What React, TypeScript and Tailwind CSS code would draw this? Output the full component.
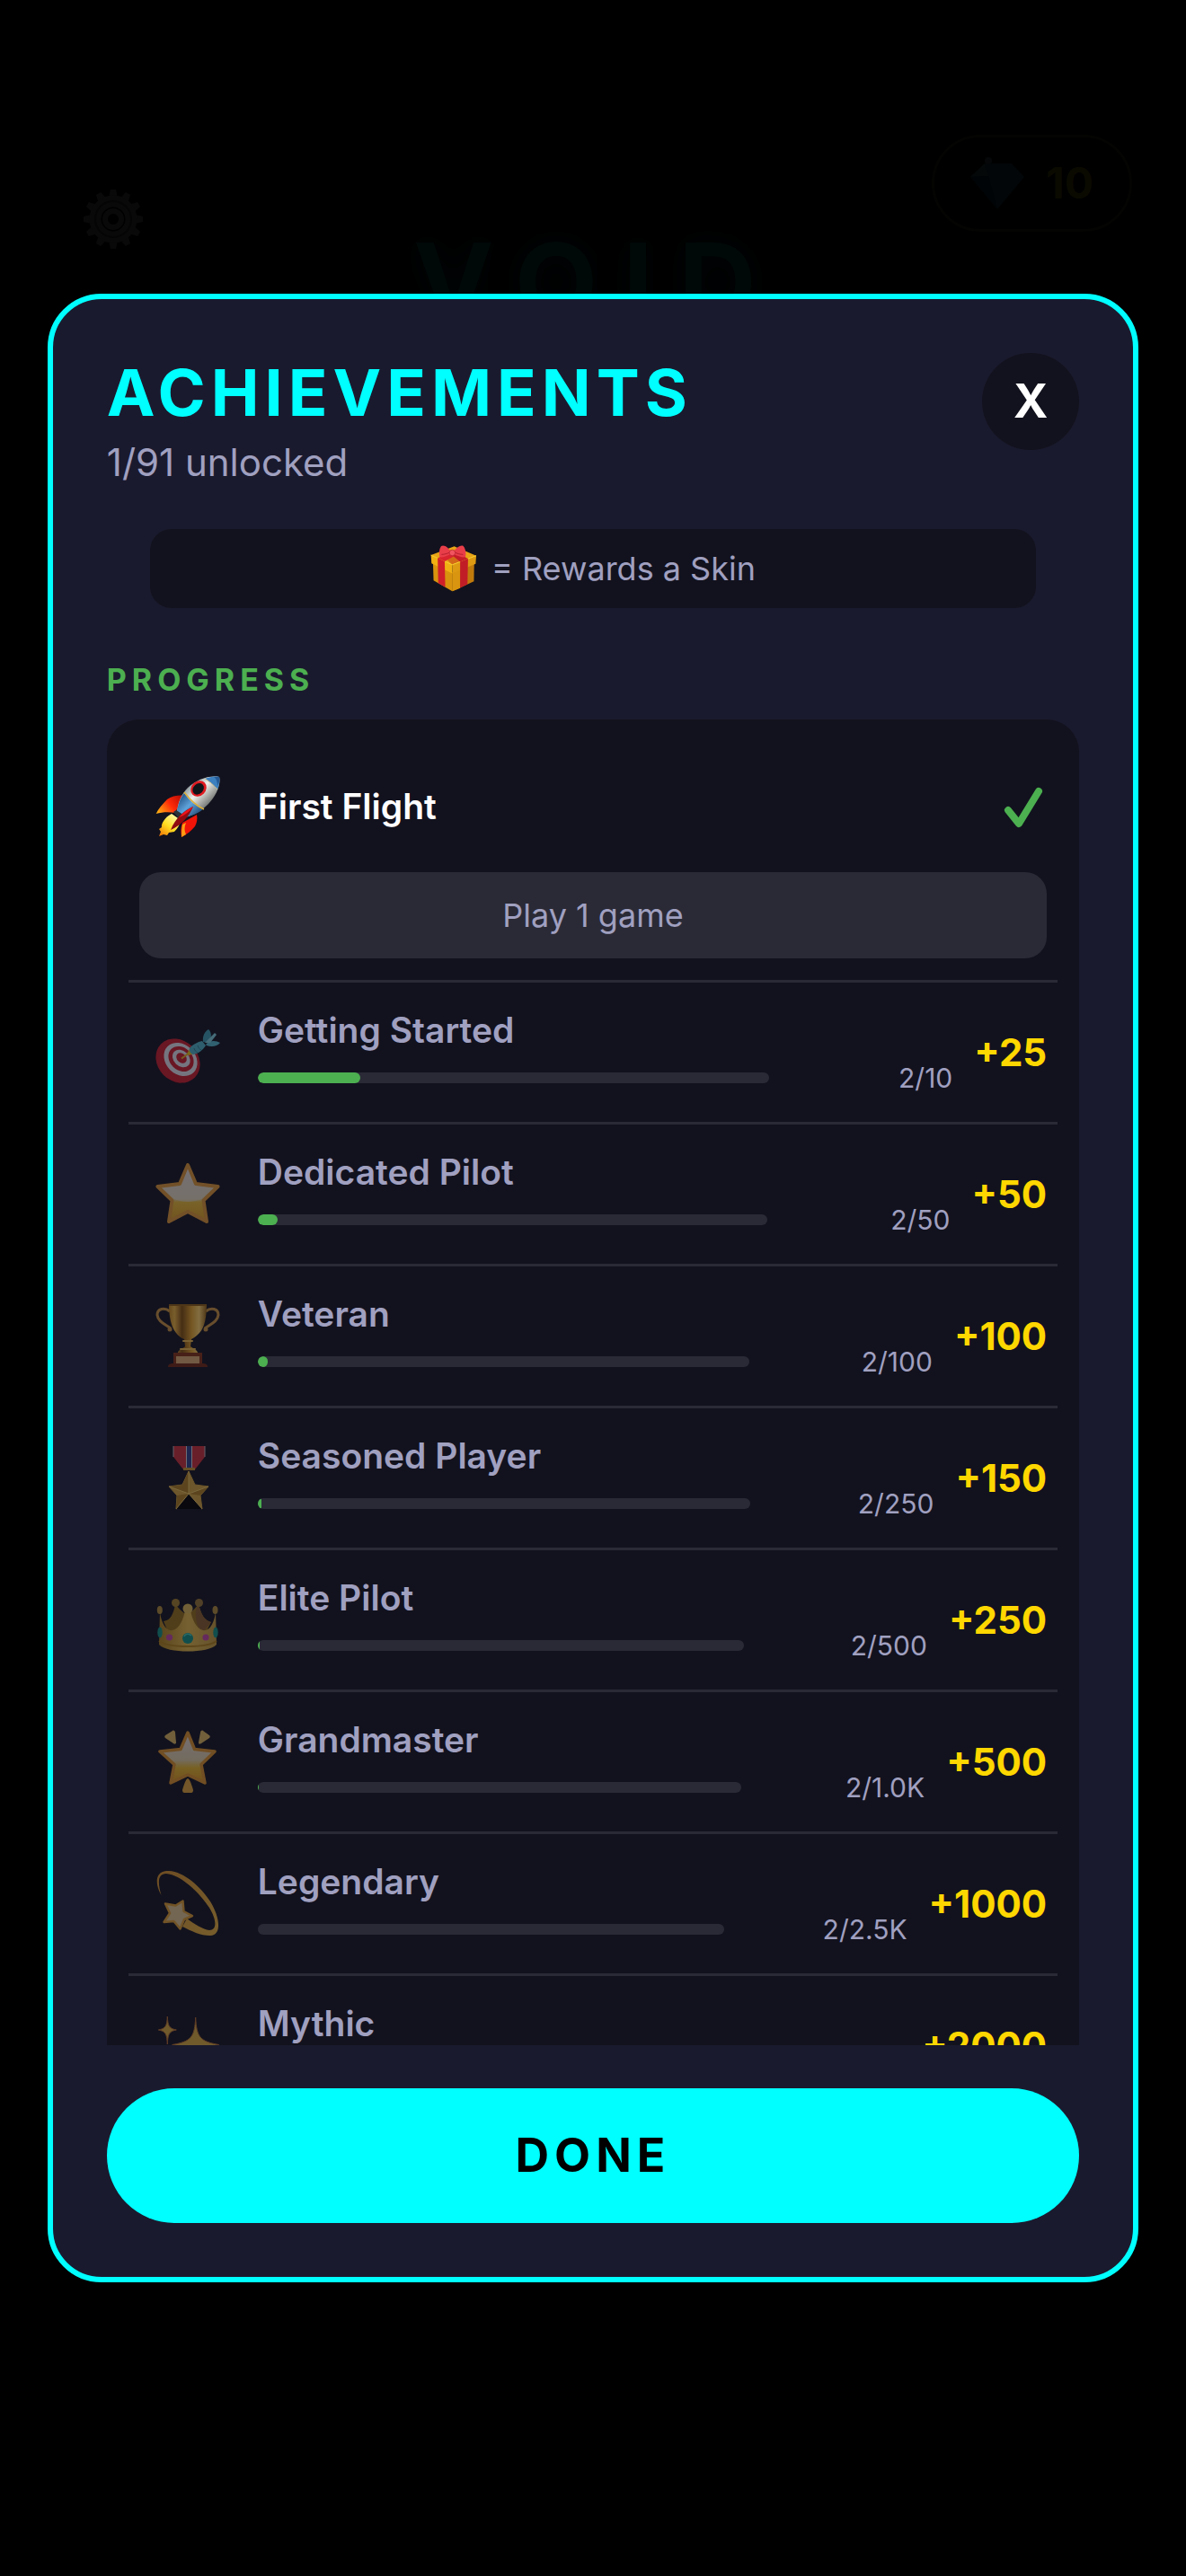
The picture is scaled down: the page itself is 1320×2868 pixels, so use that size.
import type { ReactNode } from 'react'

type Achievement = {
  name: string
  icon: ReactNode
  current: number
  target: number
  targetLabel: string
  reward: number
}

const achievements: Achievement[] = [
  { name: 'Getting Started', icon: <TargetIcon />, current: 2, target: 10, targetLabel: '10', reward: 25 },
  { name: 'Dedicated Pilot', icon: <StarIcon />, current: 2, target: 50, targetLabel: '50', reward: 50 },
  { name: 'Veteran', icon: <TrophyIcon />, current: 2, target: 100, targetLabel: '100', reward: 100 },
  { name: 'Seasoned Player', icon: <MedalIcon />, current: 2, target: 250, targetLabel: '250', reward: 150 },
  { name: 'Elite Pilot', icon: <CrownIcon />, current: 2, target: 500, targetLabel: '500', reward: 250 },
  { name: 'Grandmaster', icon: <GlowingStarIcon />, current: 2, target: 1000, targetLabel: '1.0K', reward: 500 },
  { name: 'Legendary', icon: <DizzyIcon />, current: 2, target: 2500, targetLabel: '2.5K', reward: 1000 },
  { name: 'Mythic', icon: <SparklesIcon />, current: 2, target: 5000, targetLabel: '5.0K', reward: 2000 },
]

export default function App() {
  return (
    <div className="relative min-h-screen overflow-hidden bg-black font-['Inter',sans-serif]">
      <HomeBackdrop />

      <div className="absolute inset-0 flex items-center justify-center">
        <section
          role="dialog"
          aria-labelledby="achievements-title"
          className="flex h-[77.2vh] w-[92%] flex-col rounded-[60px] border-6 border-[#00ffff] bg-[#1a1a2e] p-15"
        >
          <header className="flex items-start justify-between">
            <div>
              <h1
                id="achievements-title"
                className="text-[72px] leading-[88px] font-bold tracking-[6px] text-[#00ffff]"
              >
                ACHIEVEMENTS
              </h1>
              <p className="mt-2 text-[42px] leading-[52px] text-[#a0a0c0]">1/91 unlocked</p>
            </div>
            <button
              type="button"
              aria-label="Close"
              className="flex size-27 items-center justify-center rounded-full bg-[#12121e] text-[52px] font-bold text-white"
            >
              X
            </button>
          </header>

          <div className="mx-12 mt-12 flex h-22 items-center justify-center gap-4 rounded-3xl bg-[#12121e] text-[36px] text-[#a0a0c0]">
            <GiftIcon />
            <span>= Rewards a Skin</span>
          </div>

          <div className="mt-15 min-h-0 flex-1 overflow-y-auto [scrollbar-width:none]">
            <h2 className="text-[34px] leading-10 font-bold tracking-[6px] text-[#4caf50]">PROGRESS</h2>
            <ul className="mt-6 rounded-[36px] bg-[#12121e] p-6">
              <li className="border-b-3 border-[#2a2a36] px-3 pb-6">
                <div className="flex h-[146px] items-center gap-6">
                  <div className="flex w-27 justify-center">
                    <RocketIcon />
                  </div>
                  <h3 className="flex-1 text-[39px] font-semibold text-white">First Flight</h3>
                  <CheckMark />
                </div>
                <p className="rounded-3xl bg-[#2a2a36] py-6 text-center text-[36px] leading-12 text-[#a0a0c0]">
                  Play 1 game
                </p>
              </li>
              {achievements.map((item) => (
                <AchievementRow key={item.name} item={item} />
              ))}
            </ul>
          </div>

          <button
            type="button"
            className="mt-12 h-[150px] rounded-full bg-[#00ffff] text-[52px] font-bold tracking-[6px] text-black"
          >
            DONE
          </button>
        </section>
      </div>
    </div>
  )
}

function AchievementRow({ item }: { item: Achievement }) {
  const percent = Math.floor((item.current / item.target) * 1000) / 10

  return (
    <li className="flex h-[158px] items-center gap-6 border-b-3 border-[#2a2a36] px-3">
      <div className="flex w-27 justify-center opacity-50">{item.icon}</div>
      <div className="min-w-0 flex-1">
        <h3 className="text-[39px] leading-[46px] font-semibold text-[#a0a0c0]">{item.name}</h3>
        <div className="mt-3 flex items-center gap-6">
          <div className="h-3 flex-1 overflow-hidden rounded-full bg-[#2a2a36]">
            <div className="h-full rounded-full bg-[#4caf50]" style={{ width: `${percent}%` }} />
          </div>
          <span className="w-45 text-right text-[30px] leading-9 text-[#a0a0c0]">
            {`${item.current}/${item.targetLabel}`}
          </span>
        </div>
      </div>
      <span className="text-[42px] font-bold text-[#ffd700]">{`+${item.reward}`}</span>
    </li>
  )
}

// Home screen left almost black behind the open dialog
function HomeBackdrop() {
  return (
    <div aria-hidden="true" className="grid grid-cols-3 px-15 pt-[150px]">
      <div className="px-8 pt-15">
        <GearIcon />
      </div>
      <p className="pt-21 text-center text-[120px] leading-[160px] font-bold tracking-[28px] text-[#000808] [text-shadow:0_0_30px_#000608]">
        VOID
      </p>
      <div className="flex justify-end">
        <div className="flex h-27 items-center gap-6 rounded-full border-3 border-[#040402] px-10 text-[48px] font-bold text-[#0b0a00]">
          <DiamondIcon />
          10
        </div>
      </div>
    </div>
  )
}

function GearIcon() {
  const teeth = Array.from({ length: 12 }, (_, index) => index * 30)

  return (
    <svg viewBox="0 0 68 68" className="size-17" fill="#090909">
      {teeth.map((angle) => (
        <path key={angle} d="M29 10 L31 1 H37 L39 10Z" transform={`rotate(${angle} 34 34)`} />
      ))}
      <circle cx="34" cy="34" r="20" fill="none" stroke="#090909" strokeWidth="13" />
      <circle cx="34" cy="34" r="9" fill="none" stroke="#090909" strokeWidth="6" />
      <circle cx="34" cy="34" r="20" fill="none" stroke="#050505" strokeWidth="2" />
    </svg>
  )
}

function DiamondIcon() {
  return (
    <svg viewBox="0 0 60 60" className="size-15">
      <path d="M0 23 16 8h30l14 15-30 36Z" fill="#020608" />
      <path d="M0 23 16 8l4 14Z" fill="#050809" />
      <path d="m0 23 20-1 10 37Z" fill="#010406" />
      <circle cx="20" cy="5" r="4" fill="#050708" />
    </svg>
  )
}

function CheckMark() {
  return (
    <svg viewBox="0 0 48 48" role="img" aria-label="Unlocked" className="size-12">
      <path
        d="M5 28 17 43 39 7"
        fill="none"
        stroke="#4caf50"
        strokeWidth="8"
        strokeLinecap="round"
        strokeLinejoin="round"
      />
    </svg>
  )
}

function GiftIcon() {
  return (
    <svg viewBox="0 0 160 160" className="size-13">
      <path d="M9 60 75 94v64L11 121Z" fill="#d8930e" />
      <path d="M75 94 150 62l-1 62-74 34Z" fill="#c07a0c" />
      <path d="M75 94l27-11v64l-27 11Z" fill="#d9950f" />
      <path d="M2 34 82 4l75 32-82 31Z" fill="#e8a416" />
      <path d="M48 40 80 28l40 20-45 19Z" fill="#d46a18" />
      <path d="M2 34 75 67v30L4 62Z" fill="#f0b013" />
      <path d="M75 67l82-31-2 28-80 33Z" fill="#dd9a12" />
      <path d="M2 34 75 67l82-31" fill="none" stroke="#ffd633" strokeWidth="3" />
      <path d="M25 44 49 55l2 89-24-14Z" fill="#cf1f2a" />
      <path d="M102 57 129 46l-2 88-25 12Z" fill="#c11d26" />
      <path d="M25 44 66 28l22 6-39 21Z" fill="#d9232e" />
      <path d="M129 46 92 26l-18 8 28 23Z" fill="#c51c28" />
      <path d="M74 27C62 8 48-3 37 3c-7 10-8 25-5 37 10 4 26-2 42-13Z" fill="#e83e49" />
      <path d="M75 27C88 9 103-2 113 3c8 10 10 25 7 37-10 4-28-2-45-13Z" fill="#e83e49" />
      <path d="M38 32c8 0 20-3 30-8M112 32c-8 0-20-3-30-8" stroke="#b51e2c" strokeWidth="3" fill="none" />
      <circle cx="75" cy="26" r="10" fill="#f25560" stroke="#b51e2c" strokeWidth="2" />
    </svg>
  )
}

function RocketIcon() {
  return (
    <svg viewBox="0 0 72 72" className="size-18">
      <defs>
        <linearGradient id="rocket-body" x1="36" y1="14" x2="58" y2="36" gradientUnits="userSpaceOnUse">
          <stop offset="0" stopColor="#8f9a9e" />
          <stop offset=".4" stopColor="#f1f1ec" />
          <stop offset="1" stopColor="#6d716f" />
        </linearGradient>
        <linearGradient id="rocket-blue" x1="26" y1="28" x2="46" y2="48" gradientUnits="userSpaceOnUse">
          <stop offset="0" stopColor="#2a5c90" />
          <stop offset=".45" stopColor="#5ea3db" />
          <stop offset="1" stopColor="#234a75" />
        </linearGradient>
        <linearGradient id="rocket-fin" x1="30" y1="24" x2="4" y2="44" gradientUnits="userSpaceOnUse">
          <stop offset="0" stopColor="#b40a05" />
          <stop offset=".5" stopColor="#ff2a08" />
          <stop offset="1" stopColor="#ffae12" />
        </linearGradient>
        <linearGradient id="rocket-flame" x1="22" y1="46" x2="5" y2="68" gradientUnits="userSpaceOnUse">
          <stop offset="0" stopColor="#fff9a0" />
          <stop offset=".5" stopColor="#ffdd20" />
          <stop offset="1" stopColor="#f07806" />
        </linearGradient>
      </defs>
      <path d="M18 44C10 48 6 56 7 59l-3 2 2 3-2 5 5-2 4 1 2-3 6-1c4-4 6-8 7-13Z" fill="url(#rocket-flame)" />
      <path d="M32 23.500C25 23 18 24 13 28 8 33 3 39 .7 44c7-2 15-2 21-1Z" fill="url(#rocket-fin)" />
      <path d="M46 45c1 5 0 9-2 13-4 5-9 9-15 12-1-6-1-10 1-16Z" fill="#f01408" />
      <path d="M30 56c-1 5-1 9-1 14l5-3c-2-4-2-8 0-13Z" fill="#ff9b12" />
      <path d="M71 3c2 10-4 21-12 30-7 7-15 12-26 15l-9-6c1-11 5-20 12-27C46 6 59 1 71 3Z" fill="url(#rocket-body)" />
      <path d="M71 3c1 4 0 9-2 14-5-5-9-9-14-12 5-2 11-3 16-2Z" fill="#3d80c0" />
      <path d="M65 3c3 2 4 6 4 10 2-4 3-7 2-10Z" fill="#245a96" />
      <path d="M32 21c5 7 12 14 21 18-6 5-13 7-20 9l-9-6c1-8 3-14 8-21Z" fill="url(#rocket-blue)" />
      <path d="M32 20c6 8 13 15 22 19" fill="none" stroke="#dcae38" strokeWidth="1.500" />
      <path d="M55 5c5 3 10 7 14 12" fill="none" stroke="#d9c58e" strokeWidth="1" />
      <ellipse cx="48" cy="16" rx="9.500" ry="8" transform="rotate(-45 48 16)" fill="#e01a20" />
      <ellipse cx="47.500" cy="16" rx="7" ry="5.500" transform="rotate(-45 48 16)" fill="#10151a" />
      <path d="M20 42l6 7 5-4-8-5Z" fill="#2b3138" />
      <path d="M42 36C31 41 22 49 17 62c11-5 20-14 25-26Z" fill="#8f0b10" />
      <path d="M42 36c-6 3-12 7-16 12 6-2 12-6 16-12Z" fill="#ed141a" />
    </svg>
  )
}

function TargetIcon() {
  return (
    <svg viewBox="0 0 72 72" className="size-18">
      <path d="M40 60c-4 7-8 10-13 11-5 0-9-3-13-6Z" fill="#5d0d12" />
      <ellipse cx="25" cy="46" rx="26.500" ry="22.500" transform="rotate(45 25 46)" fill="#c01c28" />
      <ellipse cx="28" cy="44.500" rx="20.500" ry="16.500" transform="rotate(45 28 44.500)" fill="#d8d8e0" />
      <ellipse cx="28.500" cy="44" rx="15.500" ry="12.500" transform="rotate(45 28.500 44)" fill="#c01c28" />
      <ellipse cx="28.800" cy="43.500" rx="11" ry="8.500" transform="rotate(45 28.800 43.500)" fill="#d8d8e0" />
      <ellipse cx="29" cy="43" rx="6.500" ry="5" transform="rotate(45 29 43)" fill="#c01c28" />
      <path d="M29 43.500 38 37" stroke="#d9a520" strokeWidth="2" />
      <path d="m35 38 3-5 5 5-6 2Z" fill="#e0b818" />
      <path d="M38 32c3-4 9-7 14-8l4 5c-3 5-8 9-14 10-3-1-5-4-4-7Z" fill="#4aa9bc" />
      <path d="M53 25c-1-6 2-12 6-14 4 4 4 10-1 15Z" fill="#3a94a8" />
      <path d="M56 28c4-5 11-5 16-2-3 4-10 5-15 3Z" fill="#4fb0c4" />
      <path d="m55 26 11-11 2 2-7 9Z" fill="#78c4d2" />
      <path d="M43 32c1 3 2 4 4 5M47 29c1 3 2 4 4 5" stroke="#2d7789" strokeWidth="1" fill="none" />
    </svg>
  )
}

function StarIcon() {
  return (
    <svg viewBox="0 0 72 72" className="size-18">
      <defs>
        <linearGradient id="star-fill" x1="0" y1="0" x2="0" y2="1">
          <stop offset="0" stopColor="#d8ccc8" />
          <stop offset=".6" stopColor="#d6c79c" />
          <stop offset=".66" stopColor="#dfb230" />
          <stop offset="1" stopColor="#cf9420" />
        </linearGradient>
      </defs>
      <path
        d="M36 4 45 25l24.500 3-16 15.500L57 67 36 56 15 67l3.500-23.500L2.500 28l24.500-3Z"
        fill="url(#star-fill)"
        stroke="#d18e32"
        strokeWidth="4"
        strokeLinejoin="round"
      />
      <path d="M36 8 43 27l21 3-13 12c-9 4-21 4-30 0L8 30l21-3Z" fill="#d8d2c8" opacity=".55" />
    </svg>
  )
}

function TrophyIcon() {
  return (
    <svg viewBox="0 0 72 72" className="size-18">
      <defs>
        <linearGradient id="trophy-cup" x1="15" y1="0" x2="57" y2="0" gradientUnits="userSpaceOnUse">
          <stop offset="0" stopColor="#b8801c" />
          <stop offset=".15" stopColor="#e0aa3c" />
          <stop offset=".35" stopColor="#7a4a0c" />
          <stop offset=".6" stopColor="#d69a26" />
          <stop offset=".8" stopColor="#f0c765" />
          <stop offset="1" stopColor="#8a5a10" />
        </linearGradient>
      </defs>
      <path
        d="M16 9C10 4 2 6 2 13c1 8 9 10 15 15M56 9c6-5 14-3 14 4-1 8-9 10-15 15"
        fill="none"
        stroke="#bd8a3c"
        strokeWidth="3"
      />
      <circle cx="16" cy="29" r="2.500" fill="#bd8a3c" />
      <circle cx="56" cy="29" r="2.500" fill="#bd8a3c" />
      <path d="M15 1h42c0 13-2 26-8 32-4 4-7 6-9 7h-8c-3-1-7-4-9-7-6-7-8-20-8-32Z" fill="url(#trophy-cup)" />
      <path d="M15 1h42v2H15Z" fill="#8a5a14" />
      <path d="M32 40h8l-1 8c2 2 8 4 8 7H25c0-3 6-5 8-7Z" fill="url(#trophy-cup)" />
      <path d="M31 42h10M28 51h16" stroke="#e2b04a" strokeWidth="2" strokeLinecap="round" />
      <path d="M20 55h32v13H20Z" fill="#7c2f14" />
      <path d="M14 71c0-3 2-4 6-4h32c4 0 6 1 6 4Z" fill="#6a2410" />
      <path d="M23 59h26v8H23Z" fill="#d0a068" />
    </svg>
  )
}

function MedalIcon() {
  return (
    <svg viewBox="0 0 72 72" className="size-18">
      <path d="M20 1h35v12L44 27H31L20 13Z" fill="#c02c34" />
      <path d="M20 1v12M55 1v12" stroke="#b0b0b8" strokeWidth="1" />
      <path d="M34 1h7v26h-7Z" fill="#c8c8d0" />
      <path d="M35 1h5v26h-5Z" fill="#283c80" />
      <path d="M31 25h13v3H31Z" fill="#b88a2c" />
      <path
        d="M37 29 44 44l15 2-9 10 2 15-15-7-14 7 1-15-9-10 15-2Z"
        fill="#c79a38"
        stroke="#c79a38"
        strokeLinejoin="round"
      />
      <path d="M37 29v25l-7-10ZM59 46 37 54l13 2ZM52 71 37 54v10ZM23 71l14-17-13 2ZM15 46l22 8-7-10Z" fill="#a5781f" />
      <path d="M37 29v25M59 46 37 54M52 71 37 54 23 71M15 46l22 8" stroke="#e2bd5c" strokeWidth="1" />
    </svg>
  )
}

function CrownIcon() {
  return (
    <svg viewBox="0 0 72 72" className="size-18">
      <defs>
        <linearGradient id="crown-gold" x1="0" y1="0" x2="1" y2="0">
          <stop offset="0" stopColor="#a37a1c" />
          <stop offset=".5" stopColor="#d6ae44" />
          <stop offset="1" stopColor="#b8923a" />
        </linearGradient>
      </defs>
      <path d="M9 38c8-1 11-8 13-19 4 5 8 9 13 12 5-3 9-7 13-12 3 11 6 18 14 20l-8 16H16Z" fill="#8f6a18" />
      <path d="M48 19c3 11 6 18 14 20l-10 12c-5-6-8-14-7-26Z" fill="#83582a" />
      <circle cx="22.500" cy="17.500" r="4.500" fill="#9a7828" />
      <circle cx="48.500" cy="17.500" r="4.500" fill="#8f6f30" />
      <path
        d="M5 27c1 12 7 23 14 21 8-2 12-12 14-22h6c2 10 6 20 14 22 7 2 13-9 14-21l1 37c-8 10-56 10-64 0Z"
        fill="url(#crown-gold)"
      />
      <ellipse cx="4.800" cy="25.500" rx="3" ry="4.500" fill="#a58434" />
      <ellipse cx="66.500" cy="25.500" rx="3" ry="4.500" fill="#a58434" />
      <circle cx="36" cy="24" r="5.500" fill="#cfae50" />
      <path d="M4 60c10 8 54 8 64 0" fill="none" stroke="#a87a18" strokeWidth="2" />
      <circle cx="36" cy="57" r="6" fill="#0f8a7c" />
      <path d="M32 55c1-3 5-4 8-1" stroke="#40c0b0" strokeWidth="1.500" fill="none" />
      <circle cx="15.500" cy="56" r="3.600" fill="#b8429c" />
      <circle cx="56" cy="56" r="3.600" fill="#b8429c" />
      <ellipse cx="5" cy="50.500" rx="2.700" ry="6" fill="#0f8a7c" />
      <ellipse cx="67" cy="50.500" rx="2.700" ry="6" fill="#0f8a7c" />
    </svg>
  )
}

function GlowingStarIcon() {
  return (
    <svg viewBox="0 0 72 72" className="size-18">
      <defs>
        <linearGradient id="glow-fill" x1="0" y1="0" x2="0" y2="1">
          <stop offset="0" stopColor="#d6cccc" />
          <stop offset=".55" stopColor="#d4c49c" />
          <stop offset=".7" stopColor="#dcae28" />
          <stop offset="1" stopColor="#d08c1c" />
        </linearGradient>
      </defs>
      <path
        d="M36 4 43.500 22.500 66 25 51 39.500 55 60 36 51 17 60l4-20.500L5 25l23-2.500Z"
        fill="url(#glow-fill)"
        stroke="#d08a28"
        strokeWidth="3.500"
        strokeLinejoin="round"
      />
      <path d="M19 2c1-1 3 0 3 2l1 11c0 2-2 2-3 1l-9-6c-1-1-1-2 0-3ZM53 2c-1-1-3 0-3 2l-2 11c0 2 1 2 3 1l9-6c1-1 1-2 0-3Z" fill="#cfac58" />
      <path d="M36 55c2 0 5 9 6 13 0 2-1 3-2 3h-8c-1 0-2-1-2-3 1-4 4-13 6-13Z" fill="#d39a34" />
    </svg>
  )
}

function DizzyIcon() {
  return (
    <svg viewBox="0 0 72 72" className="size-18">
      <defs>
        <linearGradient id="dizzy-tail" x1="0" y1="0" x2="1" y2="1">
          <stop offset="0" stopColor="#c8882a" />
          <stop offset="1" stopColor="#dba83a" />
        </linearGradient>
      </defs>
      <path
        d="M6.500 27C-1 14 0 1 12 0c18-1 38 17 49 34 10 16 14 37 0 38-11 0-21-5-31-10l5-9c8 6 18 12 25 13 9 0 8-12 0-25C49 24 28 4 12 3 3 3 2 12 6.500 27Z"
        fill="url(#dizzy-tail)"
      />
      <path
        d="M30.500 33.500 31.500 45l9.500 5-9 4-4.500 10.500-7-8.500-11 1L16 47l-5-10.500 11.500 2Z"
        fill="#d3b987"
        stroke="#cf932e"
        strokeWidth="2.500"
        strokeLinejoin="round"
      />
    </svg>
  )
}

function SparklesIcon() {
  return (
    <svg viewBox="0 0 72 72" className="size-18" fill="#cda23a" stroke="#a8642c" strokeWidth="1">
      <path d="M13.300 4c.5 10 1.700 13.500 10 15-8.300 1.500-9.500 5-10 16-.5-11-1.700-14.500-10-16 8.300-1.500 9.500-5 10-15Z" />
      <path d="M44.700 5c1 22 5 27 26 30.500-21 3-25 11-26 34-1-23-5-31-26-34 21-3.500 25-8.500 26-30.500Z" />
      <path d="M17 47c.5 7 2 9 8 10-6 1-7.500 3-8 10-.5-7-2-9-8-10 6-1 7.500-3 8-10Z" />
    </svg>
  )
}
